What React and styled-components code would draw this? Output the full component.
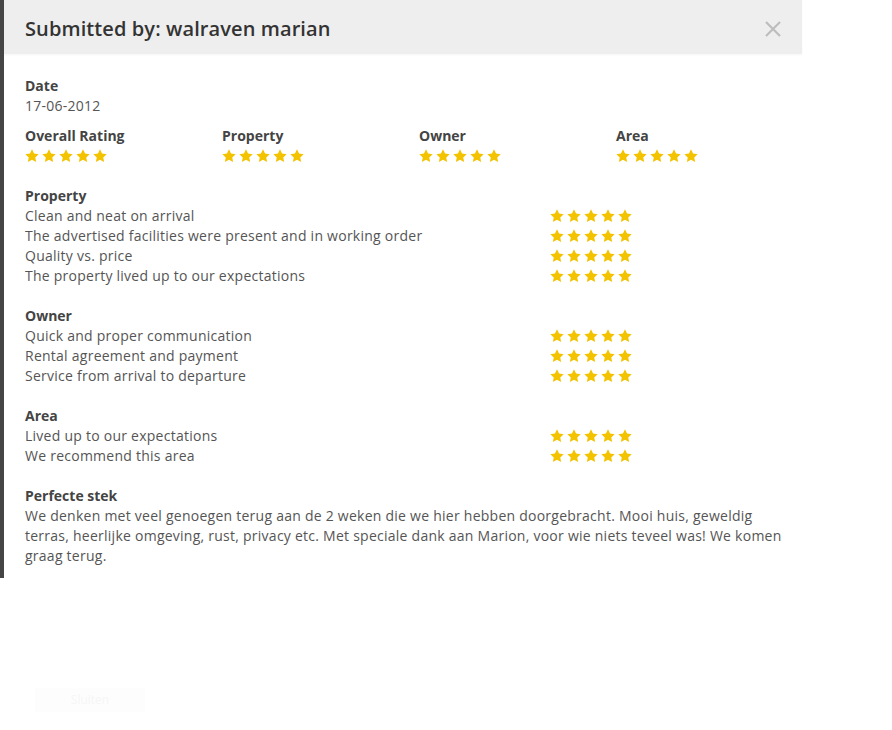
import React from "react";
import styled, { createGlobalStyle } from "styled-components";

const GlobalStyle = createGlobalStyle`
  html, body {
    margin: 0;
    padding: 0;
    background: #fff;
  }
  body {
    font-family: "Open Sans", "Liberation Sans", sans-serif;
    font-size: 14px;
    line-height: 20px;
    color: #555;
  }
`;

const sections = [
  {
    title: "Property",
    items: [
      "Clean and neat on arrival",
      "The advertised facilities were present and in working order",
      "Quality vs. price",
      "The property lived up to our expectations",
    ],
  },
  {
    title: "Owner",
    items: [
      "Quick and proper communication",
      "Rental agreement and payment",
      "Service from arrival to departure",
    ],
  },
  {
    title: "Area",
    items: ["Lived up to our expectations", "We recommend this area"],
  },
];

const overall = ["Overall Rating", "Property", "Owner", "Area"];

function Star() {
  return (
    <svg width="14" height="14" viewBox="1 1 22 22">
      <path
        fill="#f3c300"
        d="M12 1.5l3.2 6.7 7.3.9-5.4 5.1 1.4 7.3L12 18l-6.5 3.5 1.4-7.3-5.4-5.1 7.3-.9z"
      />
    </svg>
  );
}

function Stars({ count = 5 }) {
  return (
    <StarRow>
      {Array.from({ length: count }).map((_, i) => (
        <Star key={i} />
      ))}
    </StarRow>
  );
}

export default function App() {
  return (
    <>
      <GlobalStyle />
      <Modal>
        <Header>
          <Title>Submitted by: walraven marian</Title>
          <Close aria-label="close">
            <svg width="18" height="18" viewBox="0 0 18 18">
              <path d="M2 2L16 16M16 2L2 16" stroke="#bdbdbd" strokeWidth="2.2" />
            </svg>
          </Close>
        </Header>
        <Body>
          <div>
            <Label>Date</Label>
            <div>17-06-2012</div>
          </div>
          <Overall>
            {overall.map((o) => (
              <div key={o}>
                <Label>{o}</Label>
                <Stars />
              </div>
            ))}
          </Overall>
          {sections.map((s) => (
            <Section key={s.title}>
              <Label>{s.title}</Label>
              {s.items.map((it) => (
                <Item key={it}>
                  <span>{it}</span>
                  <Stars />
                </Item>
              ))}
            </Section>
          ))}
          <Section>
            <Label>Perfecte stek</Label>
            <p>
              We denken met veel genoegen terug aan de 2 weken die we hier hebben
              doorgebracht. Mooi huis, geweldig terras, heerlijke omgeving, rust,
              privacy etc. Met speciale dank aan Marion, voor wie niets teveel was!
              We komen graag terug.
            </p>
          </Section>
        </Body>
      </Modal>
      <Ghost>Sluiten</Ghost>
    </>
  );
}

const Modal = styled.div`
  width: 798px;
  border-left: 4px solid #454545;
  background: #fff;
`;

const Header = styled.div`
  height: 54px;
  box-sizing: border-box;
  background: #eeeeee;
  display: flex;
  align-items: center;
  justify-content: space-between;
  padding: 4px 20px 0 21px;
  box-shadow: 0 1px 2px rgba(0, 0, 0, 0.04);
`;

const Title = styled.h2`
  margin: 0;
  font-size: 20px;
  font-weight: 600;
  color: #333;
  letter-spacing: 0.1px;
`;

const Close = styled.span`
  display: flex;
`;

const Body = styled.div`
  padding: 22px 8px 12px 21px;
  letter-spacing: 0.25px;
`;

const Label = styled.div`
  font-weight: 700;
  color: #444;
  letter-spacing: 0;
`;

const StarRow = styled.div`
  display: flex;
  gap: 3px;
  height: 20px;
  align-items: center;
`;

const Overall = styled.div`
  display: grid;
  grid-template-columns: repeat(4, 197px);
  margin-top: 10px;
`;

const Section = styled.div`
  margin-top: 20px;
  p {
    margin: 0;
  }
`;

const Item = styled.div`
  display: grid;
  grid-template-columns: 525px auto;
`;

const Ghost = styled.div`
  margin: 110px 0 0 35px;
  width: 110px;
  height: 24px;
  line-height: 24px;
  text-align: center;
  font-size: 12px;
  color: #f6f6f6;
  background: #fdfdfd;
`;
